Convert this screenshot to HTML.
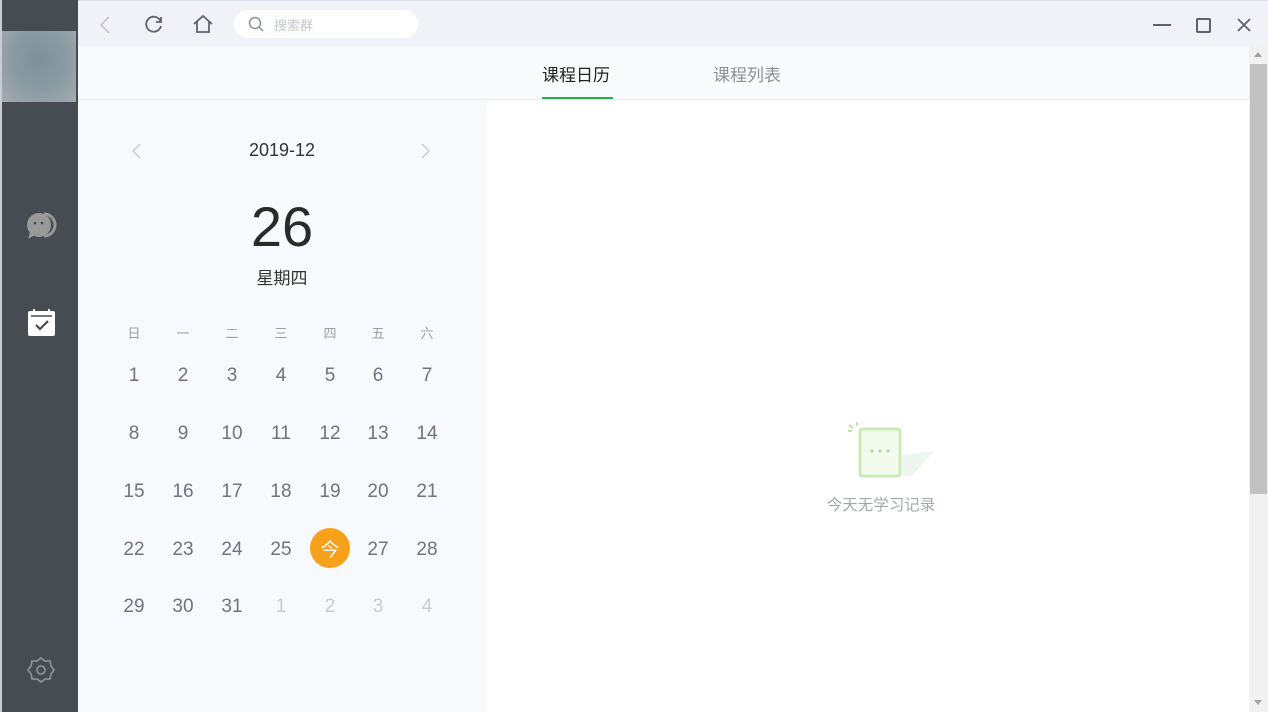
<!DOCTYPE html>
<html><head><meta charset="utf-8"><style>
*{margin:0;padding:0;box-sizing:border-box}
body{width:1268px;height:712px;overflow:hidden;position:relative;background:#fff;font-family:"Liberation Sans","Noto Sans CJK SC",sans-serif}
.abs{position:absolute}
.side{left:0;top:0;width:78px;height:712px;background:#474c53;border-left:2px solid #c9ccd1}
.top{left:78px;top:0;width:1190px;height:46px;background:#f0f2f7;border-top:1px solid #dcdfe5}
.tabs{left:78px;top:46px;width:1171px;height:54px;background:#f9fafc;border-bottom:1px solid #eceef2}
.cal{left:78px;top:100px;width:408px;height:612px;background:#f8f9fc}
.c{position:absolute;width:40px;text-align:center;transform:translateX(-20px)}
.wd{font-size:13px;color:#9aa0a8}
.dn{font-size:19px;color:#6b7480}
.gr{color:#c8ccd2}
</style></head><body>
<div class="abs side">
<div class="abs" style="left:0;top:31px;width:74px;height:71px;background:radial-gradient(ellipse at 50% 40%,#7d919b,#8a9aa2 50%,#a4abb0)"></div>
<svg class="abs" style="left:22px;top:210px" width="34" height="32" viewBox="0 0 34 32"><path d="M20 4a11 11 0 0 1 0 22" fill="none" stroke="#999" stroke-width="3"/><circle cx="15" cy="15" r="12" fill="#999"/><path d="M6 22l-2 7 7-4z" fill="#999"/><circle cx="11" cy="13" r="1.3" fill="#474c53"/><circle cx="18" cy="13" r="1.3" fill="#474c53"/></svg>
<svg class="abs" style="left:25px;top:308px" width="30" height="30" viewBox="0 0 30 30"><rect x="1" y="3" width="27" height="25" rx="2" fill="#fff"/><line x1="4" y1="8" x2="25" y2="8" stroke="#474c53" stroke-width="1.5"/><line x1="7" y1="1" x2="7" y2="5" stroke="#fff" stroke-width="2"/><line x1="22" y1="1" x2="22" y2="5" stroke="#fff" stroke-width="2"/><path d="M9 17l4 4 8-8" fill="none" stroke="#474c53" stroke-width="2.2"/></svg>
<svg class="abs" style="left:25px;top:656px" width="28" height="28" viewBox="0 0 28 28"><path d="M14 2l4 3h5l1 5 3 4-3 4-1 5h-5l-4 3-4-3H5l-1-5-3-4 3-4 1-5h5z" fill="none" stroke="#8a8f96" stroke-width="1.8"/><circle cx="14" cy="14" r="4" fill="none" stroke="#8a8f96" stroke-width="1.8"/></svg>
</div>
<div class="abs top">
<svg class="abs" style="left:20px;top:14px" width="14" height="20"><path d="M11 2L3 10l8 8" fill="none" stroke="#c3c7cd" stroke-width="1.6"/></svg>
<svg class="abs" style="left:66px;top:13px" width="20" height="20" viewBox="0 0 20 20"><path d="M16.5 7A7.5 7.5 0 1 0 17 12" fill="none" stroke="#5d636b" stroke-width="1.8"/><path d="M17 3v5h-5" fill="none" stroke="#5d636b" stroke-width="1.8"/></svg>
<svg class="abs" style="left:114px;top:12px" width="22" height="22" viewBox="0 0 22 22"><path d="M2 11L11 3l9 8M5 9v10h12V9" fill="none" stroke="#5d636b" stroke-width="1.8"/></svg>
<div class="abs" style="left:156px;top:9px;width:184px;height:28px;background:#fff;border-radius:14px"></div>
<svg class="abs" style="left:170px;top:15px" width="16" height="16"><circle cx="7" cy="7" r="5.5" fill="none" stroke="#8a9099" stroke-width="1.5"/><line x1="11" y1="11" x2="15" y2="15" stroke="#8a9099" stroke-width="1.5"/></svg>
<div class="abs" style="left:196px;top:14px;font-size:13px;color:#c4c8ce">搜索群</div>
<div class="abs" style="left:1075px;top:23px;width:18px;height:2px;background:#5d636b"></div>
<div class="abs" style="left:1118px;top:17px;width:15px;height:15px;border:2px solid #5d636b;border-radius:2px"></div>
<svg class="abs" style="left:1158px;top:16px" width="16" height="16"><path d="M2 2l12 12M14 2L2 14" stroke="#5d636b" stroke-width="1.8"/></svg>
</div>
<div class="abs tabs">
<div class="abs" style="left:464px;top:15px;font-size:17px;color:#222">课程日历</div>
<div class="abs" style="left:464px;top:51px;width:71px;height:2px;background:#27ae4a"></div>
<div class="abs" style="left:635px;top:15px;font-size:17px;color:#8a9099">课程列表</div>
</div>
<div class="abs" style="left:1249px;top:46px;width:19px;height:666px;background:#f1f1f1"></div>
<div class="abs" style="left:1250px;top:64px;width:17px;height:430px;background:#c1c1c1"></div>
<div class="abs" style="left:1254px;top:52px;border:4px solid transparent;border-bottom:5px solid #a3a3a3;border-top:0"></div>
<div class="abs" style="left:1254px;top:700px;border:4px solid transparent;border-top:5px solid #a3a3a3;border-bottom:0"></div>
<div class="abs cal">
<svg class="abs" style="left:52px;top:42px" width="12" height="18"><path d="M10 2L3 9l7 7" fill="none" stroke="#c8ccd2" stroke-width="1.4"/></svg>
<svg class="abs" style="left:342px;top:42px" width="12" height="18"><path d="M2 2l7 7-7 7" fill="none" stroke="#c8ccd2" stroke-width="1.4"/></svg>
<div class="abs" style="left:0;width:408px;top:40px;text-align:center;font-size:18px;color:#333">2019-12</div>
<div class="abs" style="left:0;width:408px;top:94px;text-align:center;font-size:56px;color:#2a2a2a;line-height:66px">26</div>
<div class="abs" style="left:0;width:408px;top:164px;text-align:center;font-size:17px;color:#333">星期四</div>
</div>
<div class="abs" style="left:310px;top:528px;width:40px;height:40px;border-radius:50%;background:#f7a11a"></div>
<div id="g"></div>
<script>
var xs=[134,183,232,281,330,378,427],ys=[377,435,493,551,608],h='';
'日一二三四五六'.split('').forEach(function(t,i){h+='<div class="c wd" style="left:'+xs[i]+'px;top:323px">'+t+'</div>'});
for(var r=0;r<5;r++)for(var c=0;c<7;c++){var n=r*7+c+1,t=n,cls='dn',st='';if(n>31){t=n-31;cls+=' gr'}if(n==26){t='今';st='color:#fff;top:535px;'}
h+='<div class="c '+cls+'" style="left:'+xs[c]+'px;top:'+(ys[r]-12)+'px;'+st+'">'+t+'</div>'}
document.getElementById('g').innerHTML=h;
</script>
<svg class="abs" style="left:845px;top:420px" width="90" height="60" viewBox="0 0 90 60"><path d="M57 35l32-4-22 25h-10z" fill="#eef6f0"/><rect x="15" y="9" width="40" height="47" rx="2" fill="#f3fbef" stroke="#c8eab8" stroke-width="3"/><circle cx="27" cy="31" r="1.6" fill="#aedc9a"/><circle cx="35" cy="31" r="1.6" fill="#aedc9a"/><circle cx="43" cy="31" r="1.6" fill="#aedc9a"/><path d="M4 5l4 3M12 2l0 4M3 11h4" stroke="#a8dc8c" stroke-width="1.4"/></svg>
<div class="abs" style="left:800px;top:493px;width:162px;text-align:center;font-size:15.5px;color:#a3a8ae">今天无学习记录</div>
</body></html>
